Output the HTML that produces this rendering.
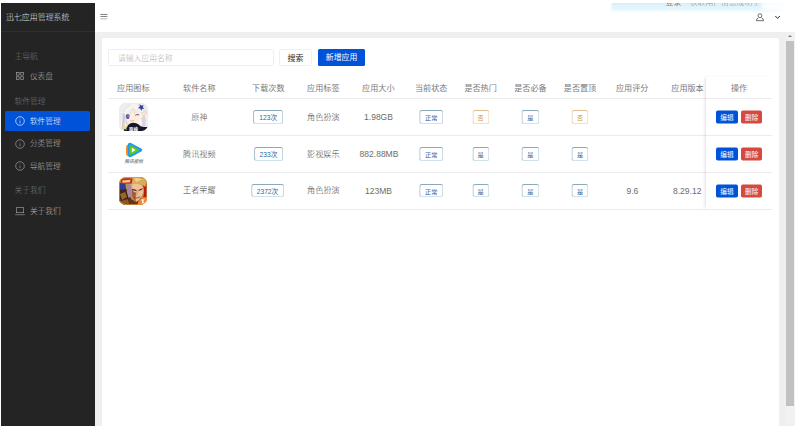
<!DOCTYPE html>
<html lang="zh-CN">
<head>
<meta charset="utf-8">
<title>迅七应用管理系统</title>
<style>
*{box-sizing:border-box;margin:0;padding:0}
html,body{width:797px;height:426px;overflow:hidden;background:#fff}
body{position:relative;font-family:"Liberation Sans","Noto Sans CJK SC",sans-serif;font-size:7.8px;font-weight:300;color:#444;-webkit-text-size-adjust:none}
.abs{position:absolute}
/* sidebar */
#side{left:1px;top:3px;width:94px;height:423px;background:#242424}
#side .title{left:5px;top:0.9px;height:28.6px;line-height:28.6px;font-size:7.95px;color:#e0e0e0;white-space:nowrap}
#side .sep{left:0;top:28.4px;width:94px;height:0.7px;background:#303030}
.grp{left:13.4px;height:12px;line-height:12px;margin-top:0.9px;color:#767676;font-size:7.8px;white-space:nowrap;transform:translateY(-50%)}
.item{left:4.3px;width:85px;height:20px;border-radius:1.5px;color:#b6b6b6;white-space:nowrap;transform:translateY(-50%)}
.item.on{background:#0052d9;color:#fff}
.item span{position:absolute;left:24.6px;top:0.9px;height:20px;line-height:20px;font-size:7.7px}
.item svg{position:absolute;left:9.6px;top:5px;width:10px;height:10px}
/* main */
#hdr{left:95px;top:0;width:700px;height:31.7px;background:#fff}
#main{left:95px;top:31.8px;width:700px;height:395px;background:#efefef}
#card{left:101.7px;top:38px;width:677.2px;height:400px;background:#fff;border-radius:1.6px}
#sb{left:786px;top:31.7px;width:9px;height:395px;background:#f1f1f1}
#sb .thumb{left:0.4px;top:9.2px;width:7.6px;height:365.3px;background:#c1c1c1}
#sb .arr{left:2.2px;top:3.8px;width:0;height:0;border-left:2.1px solid transparent;border-right:2.1px solid transparent;border-bottom:2.6px solid #7c7c7c}
/* toolbar */
#inp{left:108px;top:48.8px;width:165.8px;height:16.8px;border:0.7px solid #eeeeee;border-radius:1.5px;background:#fff;color:#adadad;line-height:17.2px;padding-left:9px;white-space:nowrap}
#bs{left:279.3px;top:48.8px;width:32.6px;height:16.8px;border:0.6px solid #f0f0f0;border-radius:1.5px;background:#fff;color:#2a2a2a;line-height:17px;text-align:center;font-size:8px;font-weight:400;white-space:nowrap}
#ba{left:317.6px;top:48.8px;width:47.9px;height:16.9px;border-radius:1.5px;background:#0052d9;color:#fff;line-height:18.8px;text-align:center;font-size:7.9px;font-weight:400;white-space:nowrap}
/* table */
.hl{left:108px;width:663.5px;height:0.7px;background:#ebebeb}
.c{font-size:8.1px;position:absolute;transform:translate(-50%,-50%);white-space:nowrap;line-height:12px;height:12px;margin-top:0.9px}
.th{color:#7a7a7a;font-weight:400;top:88px}
.r1{top:116.7px}.r2{top:153.7px}.r3{top:190.6px}
.td{color:#444}
.lat{font-size:8.5px;color:#6c6c6c;position:relative;top:-0.7px;left:0.2px}
.tag{position:absolute;transform:translate(-50%,-50%);height:13.9px;line-height:13.4px;border:0.7px solid #bdd3df;border-top-color:#86a5b7;border-left-color:#96b3c3;border-bottom-color:#d0e3ec;border-radius:2.6px;background:#fff;color:#375f9e;font-weight:400;text-align:center;white-space:nowrap;font-size:6.7px;padding:0 5px}
.tag.sq{width:17.2px;padding:0;font-size:6.2px}
.tag.st{width:23.5px;padding:0;font-size:6.2px}
.tag.w{border-color:#ecd6b4;border-top-color:#dcbc8c;border-left-color:#e2c69c;border-bottom-color:#f0e0c8;color:#d4943a}
.btn{position:absolute;transform:translateY(-50%);margin-top:0.8px;height:12.8px;line-height:13.2px;border-radius:1.8px;color:#fff;font-size:6.6px;font-weight:400;text-align:center;white-space:nowrap}
.btn.e{left:715.9px;width:22px;background:#0052d9}
.btn.d{left:741px;width:21.3px;background:#d54941}
#fix{left:705.7px;top:77px;width:65.8px;height:132px;background:#fff;box-shadow:-2px 0 3px -1px rgba(0,0,0,.13)}
.ico{position:absolute;left:118.9px;width:28.6px;height:28.4px;border-radius:6.5px;overflow:hidden}
/* toast */
#toast{left:610px;top:2.8px;width:175px;height:10.4px;background:linear-gradient(#d2eefa 0%,#def3fc 25%,#e6f6fd 62%,#ffffff 100%);overflow:hidden;-webkit-mask-image:linear-gradient(90deg,transparent 0,#000 3px,#000 166px,transparent 175px);mask-image:linear-gradient(90deg,transparent 0,#000 3px,#000 166px,transparent 175px)}
#topw{left:0;top:0;width:797px;height:3px;background:#fff}
</style>
</head>
<body>
<!-- header / main -->
<div id="hdr" class="abs"></div>
<div id="main" class="abs"></div>
<div id="card" class="abs"></div>
<div id="sb" class="abs"><div class="arr abs"></div><div class="thumb abs"></div></div>

<!-- toast -->
<div id="toast" class="abs">
  <span class="abs" style="left:55.6px;top:-5.2px;line-height:10px;font-size:7.8px;font-weight:400;color:#b9792f;white-space:nowrap">登录</span>
  <span class="abs" style="left:80px;top:-5.2px;line-height:10px;font-size:7.8px;color:#8e9c8c;white-space:nowrap">获取用户信息成功了</span>
  <div class="abs" style="left:151px;top:-1px;width:26px;height:9px;background:radial-gradient(ellipse at 48% 45%,rgba(255,255,255,.95) 0%,rgba(255,255,255,.8) 50%,rgba(255,255,255,0) 100%)"></div>
</div>
<!-- hamburger -->
<svg class="abs" style="left:99.6px;top:13px;width:8px;height:7px" viewBox="0 0 8 7">
  <rect x="0.4" y="0.95" width="7" height="0.9" fill="#6e6e6e"/>
  <rect x="0.4" y="3.0" width="7" height="0.9" fill="#7a7a7a"/>
  <rect x="0.4" y="5.35" width="7" height="1.0" fill="#b8b8b8"/>
</svg>
<!-- user + chevron -->
<svg class="abs" style="left:755px;top:12px;width:10px;height:10px" viewBox="0 0 10 10" fill="none" stroke="#4a4a4a" stroke-width="0.8">
  <circle cx="4.95" cy="3.7" r="1.95"/>
  <path d="M3.3 6.1 Q1.4 6.4 1.4 8.7 H8.5 Q8.5 6.4 6.6 6.1"/>
</svg>
<svg class="abs" style="left:774px;top:14px;width:8px;height:6px" viewBox="0 0 8 6" fill="none" stroke="#2e2e2e" stroke-width="1">
  <path d="M1.3 2 L3.6 4.4 L5.9 2"/>
</svg>

<!-- sidebar -->
<div id="side" class="abs">
  <div class="title abs">迅七应用管理系统</div>
  <div class="sep abs"></div>
  <div class="grp abs" style="top:53.1px">主导航</div>
  <div class="item abs" style="top:73.1px">
    <svg viewBox="0 0 10 10" fill="none" stroke="#b4b4b4" stroke-width="0.6"><rect x="1.3" y="1.3" width="2.8" height="2.8"/><rect x="5.8" y="1.3" width="2.8" height="2.8"/><rect x="1.3" y="5.8" width="2.8" height="2.8"/><rect x="5.8" y="5.8" width="2.8" height="2.8"/></svg>
    <span>仪表盘</span></div>
  <div class="grp abs" style="top:98px">软件管理</div>
  <div class="item on abs" style="top:118.2px">
    <svg viewBox="0 0 10 10" fill="none" stroke="#fff" stroke-width="0.65"><circle cx="5" cy="5" r="4.3"/><path d="M5 4.5V7.4M5 2.7V3.4" stroke-width="0.6"/></svg>
    <span>软件管理</span></div>
  <div class="item abs" style="top:140.5px">
    <svg viewBox="0 0 10 10" fill="none" stroke="#b2b2b2" stroke-width="0.6"><circle cx="5" cy="5" r="4.3"/><path d="M5 4.5V7.4M5 2.7V3.4" stroke-width="0.55"/></svg>
    <span>分类管理</span></div>
  <div class="item abs" style="top:162.7px">
    <svg viewBox="0 0 10 10" fill="none" stroke="#b2b2b2" stroke-width="0.6"><circle cx="5" cy="5" r="4.3"/><path d="M5 4.5V7.4M5 2.7V3.4" stroke-width="0.55"/></svg>
    <span>导航管理</span></div>
  <div class="grp abs" style="top:187.4px">关于我们</div>
  <div class="item abs" style="top:207.9px">
    <svg viewBox="0 0 10 10" fill="none" stroke="#a8a8a8" stroke-width="0.6"><rect x="1.3" y="1.7" width="7.4" height="5"/><path d="M0.2 8.7H9.8"/></svg>
    <span>关于我们</span></div>
</div>

<!-- toolbar -->
<div id="inp" class="abs">请输入应用名称</div>
<div id="bs" class="abs">搜索</div>
<div id="ba" class="abs">新增应用</div>

<!-- table lines -->
<div class="hl abs" style="top:97.5px"></div>
<div class="hl abs" style="top:134.7px"></div>
<div class="hl abs" style="top:171.8px"></div>
<div class="hl abs" style="top:208.7px"></div>
<div id="fix" class="abs"></div>
<div class="hl abs" style="top:97.5px;left:706px;width:65.5px"></div>
<div class="hl abs" style="top:134.7px;left:706px;width:65.5px"></div>
<div class="hl abs" style="top:171.8px;left:706px;width:65.5px"></div>
<div class="hl abs" style="top:208.7px;left:706px;width:65.5px"></div>

<!-- header cells -->
<div class="c th" style="left:133.3px">应用图标</div>
<div class="c th" style="left:199.3px">软件名称</div>
<div class="c th" style="left:268.3px">下载次数</div>
<div class="c th" style="left:323.3px">应用标签</div>
<div class="c th" style="left:378.3px">应用大小</div>
<div class="c th" style="left:431.2px">当前状态</div>
<div class="c th" style="left:480.6px">是否热门</div>
<div class="c th" style="left:530.4px">是否必备</div>
<div class="c th" style="left:580px">是否置顶</div>
<div class="c th" style="left:632.2px">应用评分</div>
<div class="c th" style="left:687.5px">应用版本</div>
<div class="c th" style="left:739px">操作</div>

<!-- row 1 -->
<div class="ico" style="left:118.8px;top:102.9px;width:28.8px;height:28.2px">
<svg viewBox="0 0 28.6 28.2" width="100%" height="100%" preserveAspectRatio="none">
  <defs><filter id="b1" x="-5%" y="-5%" width="110%" height="110%"><feGaussianBlur stdDeviation="0.5"/></filter></defs>
  <rect width="28.6" height="28.2" fill="#ebebf0"/>
  <g filter="url(#b1)">
  <rect x="-1" y="-1" width="31" height="31" fill="#ececf1"/>
  <path d="M1.5 29 L3.4 11 Q5 2.4 13 1.4 Q22 1 25.4 7 Q27.8 12 26.8 22 L26.4 29Z" fill="#f8f5ef"/>
  <path d="M3.6 10 Q3.6 19 2.4 27 L5.4 26 Q5.2 18 6.6 11Z" fill="#cfcbd2"/>
  <path d="M6 12 Q5.8 19 7.4 23.4 L9 21 Q7.4 17 7.6 12Z" fill="#dcd8dc"/>
  <path d="M22 15 Q24 20 22.4 25 L26.4 23.4 Q27.2 17 25.8 12Z" fill="#dad6da"/>
  <path d="M6.6 13 Q7.6 8.6 13 8.2 Q19.4 8 21.4 12 Q21.8 17 18.4 19.8 Q13.6 22 9.8 20.2 Q6.8 18 6.6 13Z" fill="#fdebdc"/>
  <path d="M5.2 12.4 Q7.4 5.8 14 5.4 Q12 8.6 10.4 11.6 Q7.6 11.2 5.2 12.4Z" fill="#f4f0ec"/>
  <path d="M14 5.4 Q20.4 5.2 23.2 10.6 Q19.4 9.6 16 11.4 Q15.4 8 14 5.4Z" fill="#f1ede9"/>
  <path d="M14 5.4 Q15.4 8 16 11.4 M10.4 11.6 Q12 8.6 14 5.4 M4.6 9 Q6 4 11 2.4 M18 2 Q23 3.4 24.6 8.4" stroke="#c6bfc4" stroke-width="0.45" fill="none"/>
  <ellipse cx="8.7" cy="13.7" rx="1.75" ry="2.2" fill="#4a52b4"/>
  <path d="M6.9 12.6 Q8.6 10.8 10.5 12.4" stroke="#3a3248" stroke-width="0.8" fill="none"/>
  <ellipse cx="9" cy="13" rx="0.6" ry="0.7" fill="#cfd6ff"/>
  <path d="M16.2 12.4 Q18 10.8 20 12" stroke="#4a3a3c" stroke-width="0.8" fill="none"/>
  <path d="M11.4 17.6 Q13 18.8 14.8 17.4" stroke="#c98a78" stroke-width="0.55" fill="none"/>
  <path d="M21.6 10.4 L27.2 7.4 L28 9.6 L23.4 13.4 Q22.2 12 21.6 10.4Z" fill="#fbe4d6"/>
  <path d="M21.6 10.4 L27.2 7.4 M23.4 13.4 L28 9.6" stroke="#c9a79a" stroke-width="0.4"/>
  <path d="M20.6 1 L22 2.8 L24.4 2 L23.6 4.2 L25.4 5.8 L23 5.8 L22 8 L21.2 5.6 L18.6 5.2 L20.6 3.8Z" fill="#2a3f9c"/>
  <path d="M4.4 29 L5.4 25.6 Q8 24 9.6 21.6 Q11 20 14.3 19.8 Q17.6 20 19.2 21.2 Q21 23.6 24.4 24 Q27 24.2 30 23.4 L30 29Z" fill="#17172f"/>
  <path d="M3.2 24.6 L4.8 21 L6.2 23.4 L8.8 23.2 L7.2 25.2 L7.8 27 L5.4 26Z" fill="#efdc7e"/>
  </g>
  <text x="14.3" y="27.7" font-size="4.4" font-weight="700" fill="#fff" text-anchor="middle" font-family="'Liberation Sans','Noto Sans CJK SC',sans-serif">原神</text>
</svg></div>
<div class="c td r1" style="left:199.3px">原神</div>
<div class="tag r1" style="left:268.3px">123次</div>
<div class="c td r1" style="left:323.3px">角色扮演</div>
<div class="c td r1" style="left:378.3px"><span class="lat">1.98GB</span></div>
<div class="tag st r1" style="left:431.2px">正常</div>
<div class="tag sq w r1" style="left:480.6px">否</div>
<div class="tag sq r1" style="left:530.4px">是</div>
<div class="tag sq w r1" style="left:580px">否</div>
<div class="btn e r1">编辑</div><div class="btn d r1">删除</div>

<!-- row 2 -->
<div class="abs" style="left:119px;top:140px;width:29px;height:29px">
<svg viewBox="0 0 29 29" width="29" height="29">
  <defs><filter id="b2" x="-10%" y="-10%" width="120%" height="120%"><feGaussianBlur stdDeviation="0.3"/></filter></defs>
  <g filter="url(#b2)">
  <path d="M9.6 4.4 Q7 4.6 7 7.4 L7 13.4 Q7 16 9.8 16.2 Q8.6 10 9.6 4.4Z" fill="#ff8c1a"/>
  <path d="M9 4 Q10.2 2 12.8 3.4 L22.2 8.6 Q24.4 10 22.2 11.6 L12.6 16.8 Q10 18 9.2 16 Q8 10 9 4Z" fill="#1a9df0"/>
  <path d="M10.6 5.8 Q11.4 4.8 12.8 5.6 L19.2 9.2 Q20.6 10.1 19.2 11 L12.8 14.6 Q11.2 15.2 10.6 14.2 Q10 10 10.6 5.8Z" fill="#66c41e"/>
  <path d="M12.8 7.8 L16.6 10.1 L12.8 12.4Z" fill="#fff"/>
  </g>
  <text x="14.6" y="22.5" font-size="4.6" font-style="italic" font-weight="500" fill="#707070" text-anchor="middle" font-family="'Liberation Sans','Noto Sans CJK SC',sans-serif">腾讯视频</text>
</svg></div>
<div class="c td r2" style="left:199.3px">腾讯视频</div>
<div class="tag r2" style="left:268.5px">233次</div>
<div class="c td r2" style="left:323.3px">影视娱乐</div>
<div class="c td r2" style="left:378.8px"><span class="lat">882.88MB</span></div>
<div class="tag st r2" style="left:431.2px">正常</div>
<div class="tag sq r2" style="left:480.6px">是</div>
<div class="tag sq r2" style="left:530.4px">是</div>
<div class="tag sq r2" style="left:580px">是</div>
<div class="btn e r2">编辑</div><div class="btn d r2">删除</div>

<!-- row 3 -->
<div class="ico" style="top:176.9px;left:119.3px;width:28.2px;height:28px;border-radius:6.8px">
<svg viewBox="0 0 28 28" width="100%" height="100%" preserveAspectRatio="none">
  <defs><filter id="b3" x="-10%" y="-10%" width="120%" height="120%"><feGaussianBlur stdDeviation="0.75"/></filter></defs>
  <rect width="28" height="28" fill="#c8953a"/>
  <g filter="url(#b3)">
  <rect x="-2" y="-2" width="32" height="32" fill="#c48e38"/>
  <path d="M0 6 L6.4 6.6 L7 13 L0 14Z" fill="#2a3f96"/>
  <path d="M0 13 L8 12 L12 22 L13 29 L0 29Z" fill="#4a2416"/>
  <path d="M1 17 L6 15 L8 20 L3 23Z" fill="#94682a"/>
  <path d="M2 24 L9 22 L10 27 L3 28Z" fill="#8a5a24"/>
  <path d="M23 6 L29 7 L29 21 L24 20 Q26 13 23 6Z" fill="#b01c18"/>
  <path d="M11 1 Q18 -1 25 2 Q28 6 26 10 Q22 6 16 7 Q12 8 11 11 Q9 6 11 1Z" fill="#d9ae58"/>
  <path d="M15 1.5 Q19 0.5 23 2.5 Q20 3 17 5Z" fill="#f0d48a"/>
  <path d="M7.5 8 Q10 6.5 12.5 8 L13 19 L9.5 21 Q7 15 7.5 8Z" fill="#a9869f"/>
  <path d="M12.5 8 Q17 5.5 22.5 8 Q25 11 24 16 Q22 22 17 25 Q13 22 12.6 16Z" fill="#eec09a"/>
  <path d="M12.6 12 Q15 16 17 15.4 Q16 21 17 25 Q13 22 12.6 16Z" fill="#a35c3a"/>
  <path d="M13 12.4 L17.4 13.6 M19.4 13.4 L23.4 11.8" stroke="#5a2e1a" stroke-width="1.1"/>
  <path d="M18.2 14 L17.6 18.6" stroke="#c98a60" stroke-width="0.9"/>
  <path d="M15 20.6 Q18 21.8 21 19.8" stroke="#8a4424" stroke-width="0.9" fill="none"/>
  <path d="M10 21 Q14 23 17 25 Q20 24 22 20.5 L22 29 L10 29Z" fill="#6a3018"/>
  <path d="M19.5 23 Q24 19.5 29 20.5 L29 29 L18 29Z" fill="#f2823a"/>
  <path d="M21.8 22.6 L25.6 22.2 L24 24.6 L26.2 26.4 L22.4 26.4 L23 24.4Z" fill="#fff5ea"/>
  <path d="M1.5 2.5 Q7 0.5 13.5 1.5 L12.5 6.8 Q7 6 1.8 7.6Z" fill="#c4222a"/>
  <path d="M3.2 3.4 L11.4 2.8 L11 5.2 L3.4 5.8Z" fill="#f2cf7a"/>
  </g>
  <rect x="0.4" y="0.4" width="27.2" height="27.2" rx="6.6" fill="none" stroke="#d6a444" stroke-width="0.9" opacity=".85"/>
</svg></div>
<div class="c td r3" style="left:199.3px">王者荣耀</div>
<div class="tag r3" style="left:267.5px">2372次</div>
<div class="c td r3" style="left:323.3px">角色扮演</div>
<div class="c td r3" style="left:378.3px"><span class="lat">123MB</span></div>
<div class="tag st r3" style="left:431.2px">正常</div>
<div class="tag sq r3" style="left:480.6px">是</div>
<div class="tag sq r3" style="left:530.4px">是</div>
<div class="tag sq r3" style="left:580px">是</div>
<div class="c td r3" style="left:632.2px"><span class="lat">9.6</span></div>
<div class="c td r3" style="left:687px"><span class="lat">8.29.12</span></div>
<div class="btn e r3">编辑</div><div class="btn d r3">删除</div>

</body>
</html>
